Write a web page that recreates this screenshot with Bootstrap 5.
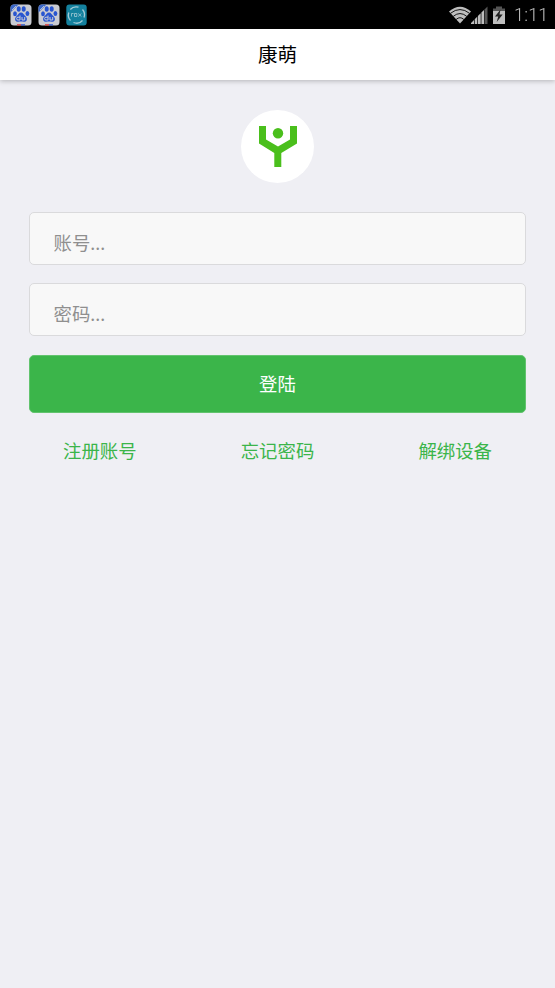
<!DOCTYPE html>
<html lang="zh-CN">
<head>
<meta charset="utf-8">
<meta name="viewport" content="width=device-width, initial-scale=1">
<title>康萌</title>
<link href="https://cdn.jsdelivr.net/npm/bootstrap@5.3.0/dist/css/bootstrap.min.css" rel="stylesheet">
<style>
body{background:#efeff4;font-family:"Noto Sans","Noto Sans CJK SC",sans-serif;font-size:18.4px;min-height:100vh;overflow:hidden}
.statusbar{height:29px;background:#000;color:#bebebe;padding:1px 7px 0 10px}
.statusbar svg{display:block}
.tray{gap:6px}
.clock{font:18px/28px Roboto,sans-serif;font-weight:300;letter-spacing:.2px;width:34px;white-space:nowrap;will-change:transform}
.titlebar{height:51px;background:#fff;box-shadow:0 1px 5px rgba(0,0,0,.25)}
.titlebar h1{font-size:19.6px;line-height:28px;color:#000;font-weight:400}
.logo{width:73px;height:73px;margin-top:30px}
.login{padding:29px 29px 0}
.login .form-control{height:53px;background:#f8f8f8;border:1px solid #dadadc;border-radius:5px;padding:7px 24px 0 23.5px;font-size:18.4px;color:#000;margin-bottom:18px}
.login .form-control::placeholder{color:#8f8f8f;opacity:1}
.btn-login{height:58px;margin-top:19px;background:#3bb54a;border:1px solid #62c36e;color:#fff;border-radius:5px;font-size:18.4px;padding:0}
.links{padding:24px 11px 0}
.links a{color:#3bb54a;line-height:28px}
</style>
<script src="https://cdn.jsdelivr.net/npm/bootstrap@5.3.0/dist/js/bootstrap.bundle.min.js"></script>
</head>
<body>
<div class="statusbar d-flex align-items-center justify-content-between">
  <div class="tray d-flex align-items-center">
    <svg width="22" height="22" viewBox="0 0 22 22"><defs><clipPath id="tile"><rect x=".5" y=".5" width="21" height="21" rx="3.5"/></clipPath>
      <g id="paw" clip-path="url(#tile)"><rect width="22" height="22" fill="#c9cbd2"/><path d="M0 0h9L0 9z" fill="#3c68c8"/><path d="M2 6l4-4" stroke="#a9bbe3"/><g fill="#2855d0"><ellipse cx="8.700" cy="5" rx="2" ry="2.800"/><ellipse cx="13.700" cy="5" rx="2" ry="2.800"/><ellipse cx="5" cy="9.700" rx="1.900" ry="2.500"/><ellipse cx="17.400" cy="9.600" rx="1.900" ry="2.500"/><path d="M11 8.500c2 0 2.800 2 4 3.300 1.600 1.500 2.400 2.700 1.700 4.400-.8 2-3 1.500-5.700 1.400-2.700.1-4.900.6-5.700-1.400-.7-1.700.1-2.900 1.700-4.400C8.200 10.500 9 8.500 11 8.500z"/></g><path d="M10 11.500v4.500H8a1.300 1.300 0 0 1 0-2.800h2M12 13v3h2.700v-3" fill="none" stroke="#c9cbd2"/><path d="M7 20.300h4v1.700H7z" fill="#d33"/><path d="M11 20.300h4v1.700h-4z" fill="#2855d0"/></g></defs><use href="#paw"/></svg>
    <svg width="22" height="22" viewBox="0 0 22 22"><use href="#paw"/></svg>
    <svg width="21" height="22" viewBox="0 0 21 22"><rect x=".3" y=".5" width="20.400" height="21" rx="3" fill="#14819e"/><g fill="none" stroke="#a5ccd7"><path d="M4.300 5.500A8 8 0 0 1 12.500 3.200M16.500 5.500A8 8 0 0 1 18 13.500M16.500 16.500A8 8 0 0 1 7.500 18.500M4.500 16.500A8 8 0 0 1 2.800 8.500" stroke-width="1.300"/><path d="M5.500 12.500V9.500h2M8.500 9.500h2.300v3H8.500zM12.200 9.500l3.200 3M15.400 9.500l-3.200 3" stroke-width=".8"/></g></svg>
  </div>
  <div class="d-flex align-items-center">
    <svg width="22" height="18" viewBox="0 0 22 18"><path d="M0 5.400Q11-4 22 5.400L11 17.500z" fill="#bebebe"/><path d="M1.500 7.300Q11-.2 20.500 7.300M4.300 10.300Q11 4.800 17.700 10.300M7.200 13.400Q11 10 14.800 13.400" stroke="#000" stroke-width=".9" fill="none"/></svg>
    <svg width="17" height="19" viewBox="1 0 17 19"><g fill="#bebebe"><path d="M0 18l4-4v4zM4.700 13.300l2.500-2.500V18H4.700zM7.900 10.100l2.800-2.800V18H7.900z"/><path d="M11.400 6.600l2.600-2.600V18h-2.600z"/></g><path d="M14.500 3.500L17.500.500v17.500h-3z" fill="#555"/></svg>
    <svg class="ms-1" width="14" height="19" viewBox="0 0 14 19"><path d="M1 2.500h3V.5h6v2h3V10H1z" fill="#555"/><path d="M1 5h12v13H1z" fill="#bebebe"/><path d="M8.500 3.500L3 10.500h3.200L4.700 16l6-7.500H7.500z" fill="#222"/></svg>
    <span class="clock ms-2 me-n1">1:11</span>
  </div>
</div>
<header class="titlebar d-flex align-items-center justify-content-center"><h1 class="m-0">康萌</h1></header>
<main>
  <svg class="logo d-block mx-auto" viewBox="0 0 73 73"><circle cx="36.500" cy="36.500" r="36.500" fill="#fff"/><g fill="#4abf1c"><circle cx="37" cy="23.300" r="5.200"/><path d="M18 16h7v13.500l12 7 12-7V16h7v17.500L40.300 43v14h-7V43L18 33.500z"/></g></svg>
  <form class="login">
    <input class="form-control shadow-none" type="text" placeholder="账号..." aria-label="账号">
    <input class="form-control shadow-none" type="password" placeholder="密码..." aria-label="密码">
    <button class="btn btn-login w-100 d-block" type="button">登陆</button>
  </form>
  <nav class="links row g-0 text-center">
    <a class="col text-decoration-none" href="#">注册账号</a>
    <a class="col text-decoration-none" href="#">忘记密码</a>
    <a class="col text-decoration-none" href="#">解绑设备</a>
  </nav>
</main>
</body>
</html>
